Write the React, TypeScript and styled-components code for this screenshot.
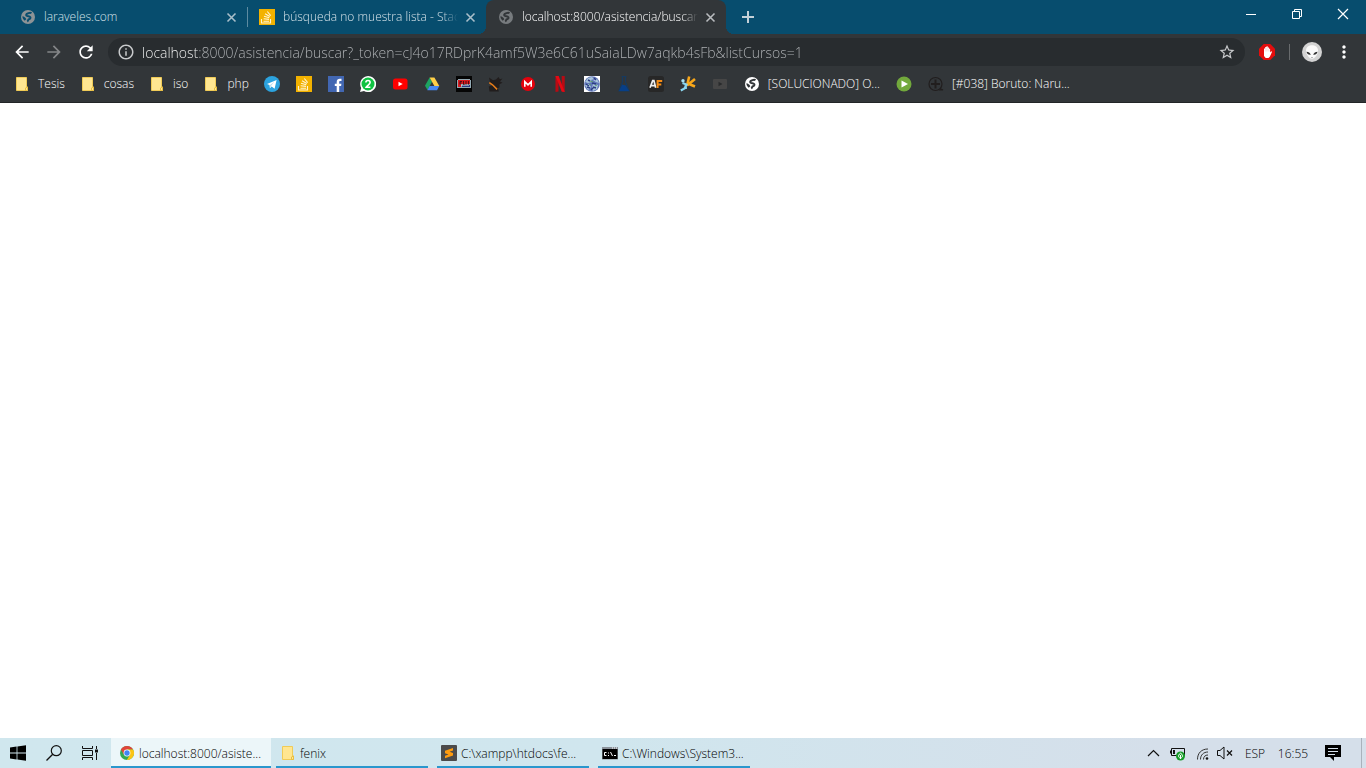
import React from "react";
import styled, { createGlobalStyle } from "styled-components";
import {
  MdArrowBack,
  MdArrowForward,
  MdInfoOutline,
  MdMoreVert,
  MdRefresh,
  MdStarBorder,
} from "react-icons/md";

const GlobalStyle = createGlobalStyle`
  * { box-sizing: border-box; }
  html, body, #root { height: 100%; }
  body {
    margin: 0;
    background: #fff;
    font-family: "Open Sans", "Noto Sans", sans-serif;
    font-size: 12px;
    font-weight: 300;
  }
  button { font: inherit; color: inherit; background: none; border: 0; padding: 0; margin: 0; }
  a { color: inherit; text-decoration: none; }
  svg { display: block; flex: none; }
`;

const Screen = styled.div`
  min-height: 100vh;
  display: flex;
  flex-direction: column;
`;

/* Tab strip */

const TabStrip = styled.header`
  display: flex;
  height: 34px;
  padding-left: 8px;
  background: #074d6e;
`;

const Tab = styled.div<{ $active?: boolean }>`
  position: relative;
  display: flex;
  align-items: center;
  gap: 8px;
  flex: 0 1 ${(p) => (p.$active ? 240 : 239)}px;
  min-width: 0;
  padding: 0 8px 0 12px;
  color: ${(p) => (p.$active ? "#fff" : "#d5e2e8")};
  background: ${(p) => (p.$active ? "#323639" : "transparent")};
  border-radius: 8px 8px 0 0;

  &::before,
  &::after {
    content: "";
    display: ${(p) => (p.$active ? "block" : "none")};
    position: absolute;
    bottom: 0;
    width: 8px;
    height: 8px;
  }
  &::before {
    left: -8px;
    background: radial-gradient(circle at 0 0, transparent 8px, #323639 8px);
  }
  &::after {
    right: -8px;
    background: radial-gradient(circle at 100% 0, transparent 8px, #323639 8px);
  }
`;

const TabDivider = styled.span`
  align-self: center;
  width: 1px;
  height: 20px;
  margin-right: -1px;
  background: #5d8ba1;
`;

const TabTitle = styled.a<{ $fade?: boolean }>`
  flex: 1;
  margin-right: -4px;
  overflow: hidden;
  white-space: nowrap;
  line-height: 16px;
  mask-image: ${(p) =>
    p.$fade ? "linear-gradient(90deg, #000 calc(100% - 16px), transparent)" : "none"};
`;

const TabClose = styled.button<{ $active?: boolean }>`
  width: 16px;
  height: 16px;
  display: grid;
  place-items: center;
  color: ${(p) => (p.$active ? "#b9bcbf" : "#a9bfca")};
`;

const NewTab = styled.button`
  width: 28px;
  margin-left: 8px;
  display: grid;
  place-items: center;
  color: #c3d0d7;
`;

const WindowControls = styled.div`
  display: flex;
  margin-left: auto;
`;

const WindowButton = styled.button`
  width: 46px;
  height: 28px;
  display: grid;
  place-items: center;
`;

/* Toolbar */

const Toolbar = styled.div`
  display: flex;
  align-items: center;
  height: 36px;
  padding: 0 6px;
  background: #323639;
  color: #fff;
`;

const ToolButton = styled.button<{ $dim?: boolean; $narrow?: boolean }>`
  width: ${(p) => (p.$narrow ? 28 : 32)}px;
  height: 28px;
  display: grid;
  place-items: center;
  color: ${(p) => (p.$dim ? "#848688" : "#fff")};
`;

const AddressBar = styled.form`
  flex: 1;
  display: flex;
  align-items: center;
  gap: 7px;
  height: 28px;
  margin-left: 6px;
  margin-right: 8px;
  padding: 0 9px;
  border-radius: 14px;
  background: #282c2f;
  color: #c8cacc;
`;

const AddressInput = styled.input`
  flex: 1;
  min-width: 0;
  height: 24px;
  padding: 0;
  border: 0;
  outline: 0;
  font: 300 14px/20px "Open Sans", "Noto Sans", sans-serif;
  color: #b4b7ba;
  -webkit-text-fill-color: transparent;
  background: linear-gradient(90deg, #fff 56px, #b4b7ba 56px);
  background-clip: text;
  -webkit-background-clip: text;
`;

const ToolDivider = styled.span`
  width: 1px;
  height: 16px;
  margin: 0 6px 0 8px;
  background: #686b6d;
`;

/* Bookmarks */

const BookmarkBar = styled.nav`
  display: flex;
  align-items: center;
  height: 33px;
  padding: 0 6px 4px;
  background: #323639;
  border-bottom: 1px solid #222527;
  color: #fff;
`;

const Bookmark = styled.a<{ $folder?: boolean }>`
  display: flex;
  align-items: center;
  gap: 8px;
  height: 24px;
  padding: 0 ${(p) => (p.$folder ? 7 : 8)}px 0 8px;
  white-space: nowrap;
  line-height: 16px;
`;

const Page = styled.main`
  flex: 1;
  background: #fff;
`;

/* Taskbar */

const Taskbar = styled.footer`
  display: flex;
  height: 30px;
  background: linear-gradient(90deg, #d0e7ee, #d0e6ee 45%, #d5dfea 85%);
  color: #000;
  font-weight: 350;
`;

const SystemButton = styled.button`
  width: 36px;
  display: grid;
  place-items: center;
`;

const TaskList = styled.div`
  display: flex;
  gap: 1px;
  margin-left: 3px;
`;

const Task = styled.button<{ $active?: boolean }>`
  position: relative;
  display: flex;
  align-items: center;
  gap: 4px;
  width: 160px;
  padding: 0 8px;
  white-space: nowrap;
  background: ${(p) => (p.$active ? "#ecf6f9" : "transparent")};

  &::after {
    content: "";
    position: absolute;
    bottom: 0;
    left: ${(p) => (p.$active ? 0 : 4)}px;
    right: ${(p) => (p.$active ? 0 : 4)}px;
    height: 2px;
    background: #2a97cd;
  }
`;

const Tray = styled.div`
  display: flex;
  align-items: center;
  margin-left: auto;
`;

const TrayButton = styled.button<{ $w: number }>`
  width: ${(p) => p.$w}px;
  height: 30px;
  display: grid;
  place-items: center;
`;

const ShowDesktop = styled.button`
  width: 5px;
  height: 30px;
  margin-left: 8px;
  border-left: 1px solid #a9b2bc;
`;

/* Drawings */

type IconProps = { children: React.ReactNode; size?: number };
const Icon = ({ children, size = 16 }: IconProps) => (
  <svg width={size} height={size} viewBox="0 0 16 16" aria-hidden="true">
    {children}
  </svg>
);

const CrossIcon = () => (
  <Icon>
    <path d="M4.500 4.500l8 8M12.500 4.500l-8 8" stroke="currentColor" strokeWidth="1.600" />
  </Icon>
);

const PlusIcon = () => (
  <Icon>
    <path d="M8 2v12M2 8h12" stroke="currentColor" strokeWidth="2" />
  </Icon>
);

const Globe = ({ disc, land }: { disc: string; land: string }) => (
  <Icon>
    <circle cx="8" cy="8" r="7" fill={disc} />
    <path
      d="M11.500 4.200C10 3.200 8.800 4.200 7.600 4.500 6 4.900 5.700 6.300 7 6.900c1.200.5 2.500.2 3.200 1.100.7 1.100-.2 2-1.300 2.300-1 .3-.7 1.600-1.700 2.200"
      fill="none"
      stroke={land}
      strokeWidth="2"
    />
    <path d="M2.400 7.300C4 7.600 5.600 8.400 6.300 10.200L4.700 11.700C3.300 10.800 2.400 9.300 2.400 7.300z" fill={land} />
  </Icon>
);

const FolderIcon = () => (
  <Icon>
    <path d="M2.500 1.500h10v9.500h1v3.500h-11z" fill="#ffe691" stroke="#f0cb57" />
    <path d="M11.500 14.500v-2.500l2-1v3.500z" fill="#ffe691" stroke="#e9bf42" />
  </Icon>
);

const StackIcon = () => (
  <Icon>
    <rect width="16" height="16" fill="#f3b200" />
    <path d="M2.500 10v4h9v-4M4.500 12.200h5.500M4.600 9.800l5.400.6M5 7.300l5.300 1.500M6 4.800l4.800 2.700M8.300 2.500l3.400 4.100" fill="none" stroke="#fff4d2" strokeWidth="1.100" />
  </Icon>
);

const TelegramIcon = () => (
  <Icon>
    <circle cx="8" cy="8" r="8" fill="#2ca3df" />
    <path d="M3 8.100l9.600-4.200-2 8.800-3-2.200-1.700 1.700-.4-3.100z" fill="#fff" />
    <path d="M5.700 9.200l4.600-3.400-3.300 4.200-.9 1.500z" fill="#b6dff2" />
  </Icon>
);

const FacebookIcon = () => (
  <Icon>
    <rect width="16" height="16" fill="#4267b2" />
    <path d="M8.700 16v-6H6.800V7.700h1.900V6c0-2.100 1.300-3.200 3.100-3.200h1.700v2.200h-1.200c-.9 0-1.100.5-1.100 1.200v1.500h2.200l-.3 2.300h-1.900v6z" fill="#fff" />
  </Icon>
);

const WhatsappIcon = () => (
  <Icon>
    <path d="M0 16l1.200-4A8 8 0 1 1 4 14.900z" fill="#fff" />
    <circle cx="8" cy="8" r="6.500" fill="#10c342" />
    <path d="M5.900 6.500c0-2.600 4.200-2.600 4.200 0 0 1.800-2.800 2.700-3.900 4.700h4.200" fill="none" stroke="#fff" strokeWidth="1.600" />
  </Icon>
);

const YoutubeIcon = () => (
  <Icon>
    <rect x="1" y="2.500" width="14.500" height="11" rx="2.500" fill="#f00" />
    <path d="M6.500 5.700l4.200 2.300-4.200 2.300z" fill="#fff" />
  </Icon>
);

const DriveIcon = () => (
  <Icon>
    <path d="M5.600 1.500L8 5.700 3.500 14 1 9.800z" fill="#1da362" />
    <path d="M5.600 1.500h4.800l4.900 8.400h-4.900z" fill="#ffcf48" />
    <path d="M5.600 9.900h9.700L13 14.200H3.300z" fill="#4688f4" />
  </Icon>
);

const FutuIcon = () => (
  <Icon>
    <rect width="16" height="16" fill="#050505" />
    <path d="M2 3h12v1h1v8H1V4h1z" fill="#93a9b3" />
    <path d="M2 4h12v4H5v3H2z" fill="#d71b20" />
    <path d="M4 8.500v-3h2M4 7h1.500M7.500 5v3.500h1M10 5v3.500M12.500 5v3.500" stroke="#4f0a10" fill="none" />
    <path d="M6 9h8v2H6z" fill="#263b7e" />
    <path d="M5.500 9.500h7" stroke="#e6edf0" strokeDasharray="1 1" />
  </Icon>
);

const CrowIcon = () => (
  <Icon>
    <path d="M1 1.500l4 2.700 3-.7L10.500 1l1.400 2.200 2.600-.7L12 5.500l2.500 1.200-3 1.500v3l-1.600 1 1 3.300H1.500l-.7-5 3-1L2 6z" fill="#211d1d" />
    <path d="M1.300 6.700l3.200 2.100 4.600 4.600" fill="none" stroke="#e77c19" strokeWidth="1.500" />
  </Icon>
);

const MegaIcon = () => (
  <Icon>
    <circle cx="8" cy="8" r="7" fill="#e4020d" />
    <path d="M4.800 10.800V5.700L8 8.900l3.200-3.200v5.100" fill="none" stroke="#fff" strokeWidth="1.600" />
  </Icon>
);

const NetflixIcon = () => (
  <Icon>
    <path d="M3.500 0h3v15.600l-3 .4zM9.700 0h3v16l-3-.4z" fill="#b90a13" />
    <path d="M3.500 0h3.200l6 16-3-.4z" fill="#e50914" />
  </Icon>
);

const SphereIcon = () => (
  <Icon>
    <rect width="16" height="16" fill="#fff" />
    <circle cx="8" cy="8" r="7.800" fill="#6177b8" />
    <path d="M1 6l3-4 4-1 2 2-3 1 1 2-4 1zM9 4l4-1 2 4-3-1zM1 9l4-1 2 3-3 3zM9 8l5 1-1 4-4 2-1-3z" fill="#a9c5dc" />
    <path d="M4 4l2 1M10 2l2 2M8 7l4 1M3 11l3 1M9 11l3 1M2 8l3 2M7 14l3-3" stroke="#2b3b83" strokeWidth="1.400" />
    <path d="M6 5l3 1M5 8l2 1M11 10l2-1" stroke="#5f9a70" />
  </Icon>
);

const FlaskIcon = () => (
  <Icon>
    <path d="M5.500.5h5M6.500 1v5L3 15h10L9.500 6V1" fill="none" stroke="#173a5f" strokeWidth="1.200" />
    <path d="M6.200 8.500L3 15h10L9.800 9.500z" fill="#073f88" />
  </Icon>
);

const AfIcon = () => (
  <Icon>
    <rect width="16" height="16" rx="2.500" fill="#272727" />
    <path d="M2 11.800L4.700 4.600h1.200l1.800 7.200M3.500 9.700h3.500" fill="none" stroke="#eee" strokeWidth="1.700" />
    <path d="M9.600 12V5h4.600M9.600 8.400h3.700" fill="none" stroke="#f68d16" strokeWidth="2" />
  </Icon>
);

const KiteIcon = () => (
  <Icon>
    <path d="M9.200.5L7.200 9M7 9.500L15 3M9 8l6 2.500" fill="none" stroke="#f9a719" strokeWidth="2.600" />
    <circle cx="3" cy="4.800" r="1.700" fill="#a8e2f4" />
    <path d="M2.500 7l4 1.500-2 4L.8 14.500M5.500 9l.5 4" fill="none" stroke="#8ad7f2" strokeWidth="2.200" />
  </Icon>
);

const VideoIcon = () => (
  <Icon>
    <rect x="1" y="3" width="14" height="10" rx="1" fill="#464646" />
    <path d="M6.500 5.700v4.600L10.500 8z" fill="#292b2c" />
  </Icon>
);

const PlayIcon = () => (
  <Icon>
    <circle cx="8" cy="8" r="7.500" fill="#72a93c" />
    <path d="M5.500 4.500v7L12 8z" fill="#fff" />
  </Icon>
);

const TargetIcon = () => (
  <Icon>
    <circle cx="7.500" cy="8" r="6.500" fill="none" stroke="#211e1e" strokeWidth="1.200" />
    <path d="M7.500 3.500v9M3 8h9" fill="none" stroke="#211e1e" strokeWidth="2" />
    <path d="M12 12.500l3 1.500h-4" fill="none" stroke="#211e1e" strokeWidth="1.200" />
  </Icon>
);

const AdblockIcon = () => (
  <Icon>
    <path d="M4.700 0h6.600L16 4.700v6.600L11.300 16H4.700L0 11.300V4.700z" fill="#e40d0d" />
    <path d="M5 9V4.600h1.200V3h1.300v-.7h1.200V3.500H10v1.200h1.100v3.800l1-1.200 1 .5-2.300 5-1.300 1.100H6.700L5 12z" fill="#fff" />
    <path d="M6.300 4.500v3M7.600 3.500v4M8.900 3.800v3.700M10 5v2.500" stroke="#f0a0a0" strokeWidth=".3" />
  </Icon>
);

const AvatarIcon = () => (
  <svg width="20" height="20" viewBox="0 0 20 20" aria-hidden="true">
    <circle cx="10" cy="10" r="10" fill="#d3d3d3" />
    <path d="M4 8.500C4 1.500 16 1.500 16 8.500c0 4.500-3.500 8.300-6 8.300S4 13 4 8.500z" fill="#fafafa" />
    <path d="M4.500 9.800c2 0 3.600 1 4.300 3-2.400.3-3.800-.7-4.300-3zM15.500 9.800c-2 0-3.600 1-4.300 3 2.400.3 3.800-.7 4.300-3z" fill="#303030" />
    <path d="M9 15.500h2" stroke="#bbb" />
  </svg>
);

const ChromeIcon = () => (
  <Icon>
    <circle cx="8" cy="8" r="7" fill="#34a853" />
    <path d="M1.900 4.500A7 7 0 0 1 14.100 4.500H8L5 9.800z" fill="#e0443a" />
    <path d="M14.100 4.500A7 7 0 0 1 7.800 15L11 9.700 8 4.500z" fill="#fbc515" />
    <circle cx="8" cy="8" r="3.400" fill="#fff" />
    <circle cx="8" cy="8" r="2.700" fill="#4285f4" />
  </Icon>
);

const SublimeIcon = () => (
  <Icon>
    <rect width="16" height="16" rx="1" fill="#4b4b4b" />
    <path d="M4 5.700l8-2.700v2.600L8.600 6.800l3.400 1.100v2.600L4 13.200v-2.500l3.500-1.200L4 8.300z" fill="#ff9c0f" />
  </Icon>
);

const ConsoleIcon = () => (
  <Icon>
    <rect x="0" y="2" width="16" height="12.500" fill="#8b929a" />
    <rect x=".5" y="4" width="15" height="10" fill="#000" />
    <path d="M10 3h1M12 3h1M14 3h1" stroke="#fff" />
    <path d="M4.500 7.500h-2v3h2M6.500 7.500v1M6.500 10v1M8.500 7l2 4M12 10.500h2" fill="none" stroke="#fff" />
  </Icon>
);

const WindowsIcon = () => (
  <Icon>
    <path d="M0 2.400l6.600-.9v6H0zM7.400 1.400L16 .2v7.300H7.400zM0 8.400h6.600v6L0 13.600zM7.400 8.400H16v7.400l-8.600-1.200z" fill="#000" />
  </Icon>
);

const SearchIcon = () => (
  <Icon>
    <circle cx="10.300" cy="5.700" r="5" fill="none" stroke="#111" strokeWidth="1.200" />
    <path d="M6.700 9.300L.5 15.500" stroke="#111" strokeWidth="1.300" />
  </Icon>
);

const TaskViewIcon = () => (
  <Icon>
    <path d="M.5 1v2.500h10V1M.5 15v-2.500h10V15M.5 5.500h10v5H.5zM14.500 1v3M14.500 8v7" fill="none" stroke="#111" />
    <rect x="13" y="4.500" width="3" height="3" fill="#111" />
  </Icon>
);

const ChevronIcon = () => (
  <Icon>
    <path d="M3 11l5.500-5.500L14 11" fill="none" stroke="#111" strokeWidth="1.200" />
  </Icon>
);

const BatteryIcon = () => (
  <Icon>
    <path d="M2.500 3.500h13v7h-13zM1.500 5.500v3" fill="none" stroke="#111" />
    <rect x="4" y="5" width="2" height="4" fill="#111" />
    <circle cx="11.500" cy="11" r="4.500" fill="#159c28" />
    <path d="M11.500 8c-3.500 3-1.500 5 0 5s3.500-2 0-5zM11.500 10v4" fill="none" stroke="#fff" />
  </Icon>
);

const WifiIcon = () => (
  <Icon>
    <path d="M4.500 14.500C4.500 8 8.500 4 15 4M7.500 14.500c0-4.500 3-7.500 7.500-7.500M10.500 14.500c0-2.800 1.700-4.500 4.500-4.500" fill="none" stroke="#333" />
    <circle cx="14" cy="13.500" r="1.300" fill="#111" />
  </Icon>
);

const MutedIcon = () => (
  <Icon>
    <path d="M.5 5.500H3L7 2v12L3 10.500H.5z" fill="none" stroke="#111" />
    <path d="M10 5.500l5 5M15 5.500l-5 5" stroke="#111" strokeWidth="1.200" />
  </Icon>
);

const NoticeIcon = () => (
  <Icon>
    <path d="M0 0h16v12H9v4l-4-4H0z" fill="#000" />
    <path d="M3 3.500h10M3 6.500h10M3 9.500h7" stroke="#d5dfea" />
  </Icon>
);

const bookmarks: { name: string; icon: React.ReactNode; label?: string; folder?: boolean }[] = [
  { name: "Tesis", icon: <FolderIcon />, label: "Tesis", folder: true },
  { name: "cosas", icon: <FolderIcon />, label: "cosas", folder: true },
  { name: "iso", icon: <FolderIcon />, label: "iso", folder: true },
  { name: "php", icon: <FolderIcon />, label: "php", folder: true },
  { name: "Telegram", icon: <TelegramIcon /> },
  { name: "Stack Overflow", icon: <StackIcon /> },
  { name: "Facebook", icon: <FacebookIcon /> },
  { name: "WhatsApp", icon: <WhatsappIcon /> },
  { name: "YouTube", icon: <YoutubeIcon /> },
  { name: "Drive", icon: <DriveIcon /> },
  { name: "Series", icon: <FutuIcon /> },
  { name: "Crow", icon: <CrowIcon /> },
  { name: "Mega", icon: <MegaIcon /> },
  { name: "Netflix", icon: <NetflixIcon /> },
  { name: "Sphere", icon: <SphereIcon /> },
  { name: "Lab", icon: <FlaskIcon /> },
  { name: "AF", icon: <AfIcon /> },
  { name: "Kite", icon: <KiteIcon /> },
  { name: "Video", icon: <VideoIcon /> },
  { name: "Solucionado", icon: <Globe disc="#fff" land="#323639" />, label: "[SOLUCIONADO] O..." },
  { name: "Play", icon: <PlayIcon /> },
  { name: "Boruto", icon: <TargetIcon />, label: "[#038] Boruto: Naru..." },
];

const tasks = [
  { icon: <ChromeIcon />, label: "localhost:8000/asiste...", active: true },
  { icon: <FolderIcon />, label: "fenix" },
  { icon: <SublimeIcon />, label: "C:\\xampp\\htdocs\\fe..." },
  { icon: <ConsoleIcon />, label: "C:\\Windows\\System3..." },
];

export default function App() {
  return (
    <Screen>
      <GlobalStyle />
      <TabStrip>
        <Tab>
          <Globe disc="#8d9396" land="#074d6e" />
          <TabTitle href="#">laraveles.com</TabTitle>
          <TabClose aria-label="Cerrar"><CrossIcon /></TabClose>
        </Tab>
        <TabDivider />
        <Tab>
          <StackIcon />
          <TabTitle $fade href="#">búsqueda no muestra lista - Stack</TabTitle>
          <TabClose aria-label="Cerrar"><CrossIcon /></TabClose>
        </Tab>
        <Tab $active>
          <Globe disc="#777b7e" land="#323639" />
          <TabTitle $fade href="#">localhost:8000/asistencia/buscar?</TabTitle>
          <TabClose $active aria-label="Cerrar"><CrossIcon /></TabClose>
        </Tab>
        <NewTab aria-label="Nueva pestaña"><PlusIcon /></NewTab>
        <WindowControls>
          <WindowButton aria-label="Minimizar">
            <Icon><path d="M3 8.500h10" stroke="#fff" /></Icon>
          </WindowButton>
          <WindowButton aria-label="Restaurar">
            <Icon><path d="M3.500 5.500h7v7h-7zM5.500 5.500v-2h7v7h-2" fill="none" stroke="#fff" /></Icon>
          </WindowButton>
          <WindowButton aria-label="Cerrar ventana">
            <Icon><path d="M3 3l10 10M13 3L3 13" stroke="#fff" strokeWidth="1.200" /></Icon>
          </WindowButton>
        </WindowControls>
      </TabStrip>

      <Toolbar>
        <ToolButton aria-label="Atrás"><MdArrowBack size={20} stroke="currentColor" /></ToolButton>
        <ToolButton $dim aria-label="Adelante"><MdArrowForward size={20} /></ToolButton>
        <ToolButton aria-label="Recargar"><MdRefresh size={20} stroke="currentColor" /></ToolButton>
        <AddressBar onSubmit={(e) => e.preventDefault()}>
          <MdInfoOutline size={18} />
          <AddressInput
            aria-label="Dirección"
            spellCheck={false}
            defaultValue="localhost:8000/asistencia/buscar?_token=cJ4o17RDprK4amf5W3e6C61uSaiaLDw7aqkb4sFb&listCursos=1"
          />
          <MdStarBorder size={18} />
        </AddressBar>
        <ToolButton $narrow aria-label="AdBlock"><AdblockIcon /></ToolButton>
        <ToolDivider />
        <ToolButton aria-label="Perfil"><AvatarIcon /></ToolButton>
        <ToolButton aria-label="Menú"><MdMoreVert size={20} /></ToolButton>
      </Toolbar>

      <BookmarkBar>
        {bookmarks.map((b) => (
          <Bookmark key={b.name} $folder={b.folder} href="#" aria-label={b.label ?? b.name}>
            {b.icon}
            {b.label}
          </Bookmark>
        ))}
      </BookmarkBar>

      <Page />

      <Taskbar>
        <SystemButton aria-label="Inicio"><WindowsIcon /></SystemButton>
        <SystemButton aria-label="Buscar"><SearchIcon /></SystemButton>
        <SystemButton aria-label="Vista de tareas"><TaskViewIcon /></SystemButton>
        <TaskList>
          {tasks.map((t) => (
            <Task key={t.label} $active={t.active}>
              {t.icon}
              {t.label}
            </Task>
          ))}
        </TaskList>
        <Tray>
          <TrayButton $w={24} aria-label="Iconos ocultos"><ChevronIcon /></TrayButton>
          <TrayButton $w={24} aria-label="Batería"><BatteryIcon /></TrayButton>
          <TrayButton $w={24} aria-label="Red"><WifiIcon /></TrayButton>
          <TrayButton $w={24} aria-label="Volumen"><MutedIcon /></TrayButton>
          <TrayButton $w={36}>ESP</TrayButton>
          <TrayButton $w={40}>16:55</TrayButton>
          <TrayButton $w={40} aria-label="Notificaciones"><NoticeIcon /></TrayButton>
          <ShowDesktop aria-label="Mostrar escritorio" />
        </Tray>
      </Taskbar>
    </Screen>
  );
}
